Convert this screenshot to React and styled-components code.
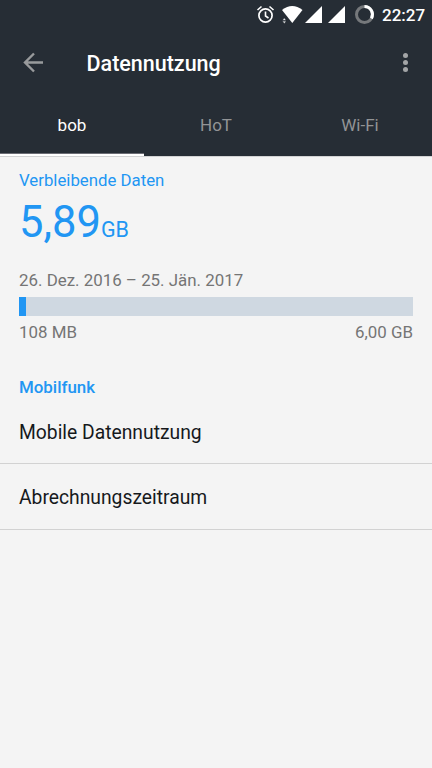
import React from 'react';
import styled, { createGlobalStyle } from 'styled-components';

const Global = createGlobalStyle`
  * { box-sizing: border-box; }
  body { margin: 0; background: #f4f4f4; font-family: Roboto, "Noto Sans", sans-serif; }
`;
const Screen = styled.main`
  width: 432px; height: 768px; overflow: hidden; background: #f4f4f4; color: #16191c;
  display: flex; flex-direction: column;
`;
const Header = styled.header`
  height: 156px; background: #262d35; display: flex; flex-direction: column; flex: none;
  box-shadow: 0 1px 0 #d2d3d4;
`;
const StatusBar = styled.div`
  height: 29px; display: flex; justify-content: flex-end; color: #fff;
`;
const StatusIcons = styled.svg` width: 130px; height: 29px; `;
const Clock = styled.span`
  width: 50px; font-size: 17px; line-height: 30px; font-weight: 500; white-space: nowrap;
`;
const AppBar = styled.div`
  height: 67px; display: flex; align-items: center; padding: 0 16px 0 20px;
`;
const BackIcon = styled.svg` width: 27px; height: 27px; margin-right: 39.5px; `;
const MenuIcon = styled.svg` width: 20px; height: 27px; margin-left: auto; `;
const Title = styled.h1` margin: 0; padding-top: 2px; font-size: 21.5px; font-weight: 500; line-height: 30px; color: #fff; `;
const Tabs = styled.nav` height: 60px; display: grid; grid-template-columns: repeat(3, 1fr); `;
const Tab = styled.div`
  font-size: 17px; line-height: 58px; text-align: center;
  color: ${p => p.$active ? '#fff' : '#929496'};
  border-bottom: 2px solid ${p => p.$active ? '#fff' : 'transparent'};
  box-shadow: ${p => p.$active ? 'inset 0 -1px 0 #6b6c74' : 'none'};
`;
const Usage = styled.section` padding: 14px 19px 0; height: 211px; flex: none; `;
const Label = styled.div` font-size: 16.8px; line-height: 20px; color: #2196f3; `;
const Amount = styled.div` font-size: 43.5px; line-height: 54px; height: 80px; padding-top: 6px; color: #2196f3; `;
const Unit = styled.span` font-size: 21.5px; `;
const Row = styled.div` display: flex; justify-content: space-between; font-size: 16.9px; line-height: 20px; color: #757575; `;
const Track = styled.div` height: 19px; margin: 7px 0 6px; background: #cfd8e1; `;
const Fill = styled.div` width: 7px; height: 100%; background: #2196f3; `;
const SectionTitle = styled.h2` margin: 0; padding: 10px 19px 0; height: 32px; font-size: 16.9px; line-height: 20px; font-weight: 500; color: #2196f3; `;
const Item = styled.div`
  height: ${p => p.$h}px; border-bottom: 1px solid #d2d2d2; padding: 0 19px;
  font-size: 19.3px; line-height: 68px; flex: none;
`;

export default function App() {
  return <Screen>
    <Global />
    <Header>
      <StatusBar>
        <StatusIcons viewBox="252 0 130 29" fill="none">
          <circle cx="265.5" cy="15.5" r="6.6" stroke="#fff" strokeWidth="1.7" />
          <path d="M265.5 11.500v4.500l3 2M257.500 10l4-3.500M273.500 10l-4-3.500" stroke="#fff" strokeWidth="1.6" />
          <path d="M282 10Q292.300 2 302.500 10L292.300 23Z" fill="#fff" />
          <path d="M282.500 20.200l1.800-2.200 1.800 2.200ZM282.500 21.200l1.800 2.200 1.800-2.200Z" fill="#fff" stroke="#262d35" strokeWidth="0.4" />
          <path d="M322 6v17h-17ZM345 6v17h-17Z" fill="#fff" />
          <circle cx="364.5" cy="14.5" r="8" stroke="#75787b" strokeWidth="3" />
          <path d="M364.500 6.500a8 8 0 0 1 6.900 12" stroke="#fff" strokeWidth="3" />
        </StatusIcons>
        <Clock>22:27</Clock>
      </StatusBar>
      <AppBar>
        <BackIcon viewBox="0 0 27 27" fill="none" stroke="#989a9c" strokeWidth="2.4"><path d="M23 13.500H6M14 4.500l-9 9 9 9" /></BackIcon>
        <Title>Datennutzung</Title>
        <MenuIcon viewBox="0 0 20 27" fill="#a3a5a7"><circle cx="9.5" cy="6.5" r="2.5" /><circle cx="9.5" cy="13.5" r="2.5" /><circle cx="9.5" cy="20.5" r="2.5" /></MenuIcon>
      </AppBar>
      <Tabs><Tab $active>bob</Tab><Tab>HoT</Tab><Tab>Wi-Fi</Tab></Tabs>
    </Header>
    <Usage>
      <Label>Verbleibende Daten</Label>
      <Amount>5,89<Unit>GB</Unit></Amount>
      <Row>26. Dez. 2016 – 25. Jän. 2017</Row>
      <Track><Fill /></Track>
      <Row><span>108 MB</span><span>6,00 GB</span></Row>
    </Usage>
    <SectionTitle>Mobilfunk</SectionTitle>
    <Item $h={65}>Mobile Datennutzung</Item>
    <Item $h={66}>Abrechnungszeitraum</Item>
  </Screen>;
}
